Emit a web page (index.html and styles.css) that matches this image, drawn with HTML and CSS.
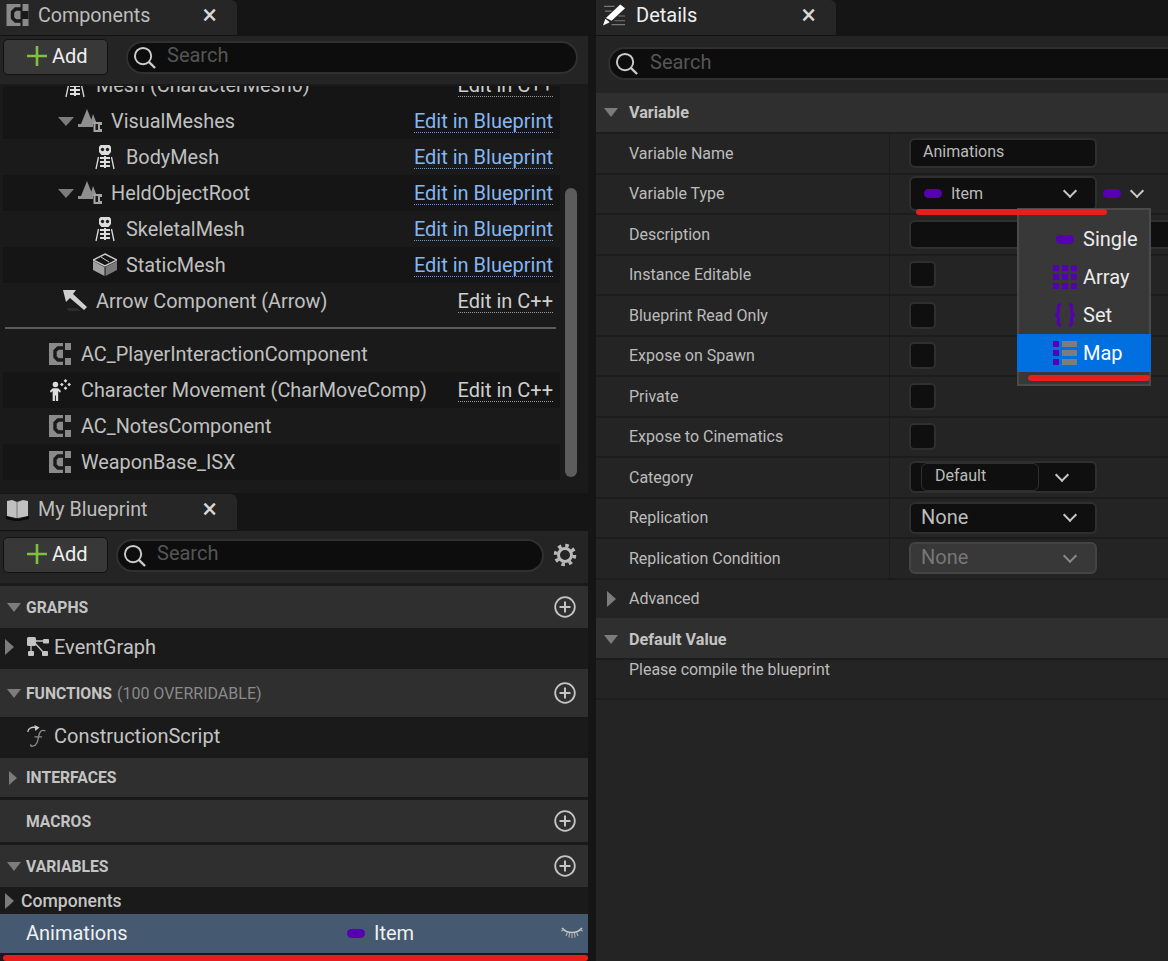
FILE: index.html
```html
<!DOCTYPE html>
<html>
<head>
    <title>Blueprint Editor</title>
    <link rel="stylesheet" href="styles.css">
</head>
<body>
    <svg class="defs" width="0" height="0">
        <symbol id="i-class" viewBox="0 0 22 22"><path d="M0 0H22V22H0Z" fill="#8a8a8a"/><path d="M15 5H9L6 8V14L9 17H15" fill="none" stroke="#1a1a1a" stroke-width="3.400"/><path d="M14 0h2v7h6v8h-6v7h-2z" fill="#1a1a1a"/></symbol>
        <symbol id="i-search" viewBox="0 0 24 24"><circle cx="10.5" cy="10.5" r="8.5" fill="none" stroke="#ccc" stroke-width="2"/><path d="M16.5 16.5L23 23" stroke="#ccc" stroke-width="2.4"/></symbol>
        <symbol id="i-plus" viewBox="0 0 20 20"><path d="M10 0V20M0 10H20" stroke="#7fc13f" stroke-width="2.6"/></symbol>
        <symbol id="i-add" viewBox="0 0 22 22"><circle cx="11" cy="11" r="9.8" fill="none" stroke="#c4c4c4" stroke-width="1.8"/><path d="M11 5.5V16.5M5.5 11H16.5" stroke="#c4c4c4" stroke-width="2"/></symbol>
        <symbol id="i-skeleton" viewBox="0 0 20 26"><path d="M5.500 1h9l1.500 2v5l-2.500 3h-7L4 8V3Z" fill="#ddd"/><circle cx="7.500" cy="5.500" r="1.700" fill="#222"/><circle cx="12.500" cy="5.500" r="1.700" fill="#222"/><path d="M5 13h10v2H5zM5 17h10v2H5zM5 21h10v2H5zM9 12h2v12H9z" fill="#ddd"/><path d="M3.500 13L1 25M16.500 13L19 25" stroke="#ddd" stroke-width="1.300" fill="none"/></symbol>
        <symbol id="i-scene" viewBox="0 0 24 24"><path d="M9 0L15 15H3ZM15 5L19 15H12Z" fill="#8f8f8f"/><path d="M0 15H15V18H0Z" fill="#8f8f8f"/><path d="M15.500 13H24V16H22V20H24V23H15.500Z" fill="#a5a5a5"/><path d="M17.500 15H20V21H17.500Z" fill="#1a1a1a"/></symbol>
        <symbol id="i-cube" viewBox="0 0 24 24"><path d="M12 1L24 7L12 13L0 7Z" fill="none" stroke="#c8c8c8" stroke-width="1.400"/><path d="M8 4L16 9" stroke="#c8c8c8"/><path d="M0 8L11.500 14V23L0 17Z" fill="#a0a0a0"/><path d="M24 8L12.500 14V23L24 17Z" fill="#787878"/></symbol>
        <symbol id="i-arrow" viewBox="0 0 24 22"><path d="M0 0H13L10 4L24 17L21 20L7 8L3 12Z" fill="#cfcfcf"/><path d="M3 18H14L18 21H6Z" fill="#2c2c2c"/></symbol>
        <symbol id="i-move" viewBox="0 0 24 24"><circle cx="7" cy="6" r="3" fill="#ddd"/><path d="M1 13L4 10H10L13 13L12 15L10 13V24H7.500V18H6.500V24H4V13L2 15Z" fill="#ddd"/><path d="M18 0L20 2L18 4L16 2ZM18 8L20 10L18 12L16 10ZM14 4L16 6L14 8L12 6ZM22 4L24 6L22 8L20 6Z" fill="#ddd"/></symbol>
        <symbol id="i-book" viewBox="0 0 23 22"><path d="M1 2L6 1L11 3L17 1L22 2L22 17L12 19H10L1 17Z" fill="#c0c0c0"/><path d="M11 3V19" stroke="#777"/><path d="M0 17L10 20H13L23 17V20L13 22H8L0 20Z" fill="#0a0a0a"/></symbol>
        <symbol id="i-pencil" viewBox="0 0 24 22"><path d="M18 0L23 4L9 17L3 14Z" fill="#fff"/><path d="M1 2H12M2 7H9M16 12H23M12 17H23M9 21H23" stroke="#777" stroke-width="1.200"/><path d="M0 22L2.500 15L7 18.500Z" fill="#fff"/></symbol>
        <symbol id="i-graph" viewBox="0 0 22 20"><rect x="0" y="0" width="9" height="9" rx="1.500" fill="#c4c4c4"/><rect x="16" y="2" width="6" height="4.500" rx="1" fill="#c4c4c4"/><rect x="1" y="14" width="6" height="5" rx="1" fill="#c4c4c4"/><rect x="15" y="14" width="6" height="5" rx="1" fill="#c4c4c4"/><path d="M8 4H16M4 8V14M8 6L16 15" stroke="#c4c4c4" stroke-width="1.300" fill="none"/></symbol>
        <symbol id="i-func" viewBox="0 0 24 26"><path d="M1 8C2 3 6 2 11 3" stroke="#ccc" stroke-width="1.600" fill="none"/><path d="M9 0L15 3L10 7Z" fill="#ccc"/><path d="M22 7C17 5 15 8 14 13C13 19 12 24 7 25C5 25.500 4 24.500 5 23M9 14H18" stroke="#8a8a8a" stroke-width="1.600" fill="none"/></symbol>
        <symbol id="i-lashes" viewBox="0 0 22 12"><path d="M1 1C6 7 16 7 21 1" stroke="#c8c8c8" stroke-width="1.600" fill="none"/><path d="M0 4L4 2.500M22 4L18 2.500M5 9L6.500 5M17 9L15.500 5M11 11V6.500M8 10.500L8.500 6M14 10.500L13.500 6" stroke="#b0b0b0" stroke-width="1.100"/></symbol>
        <symbol id="i-array" viewBox="0 0 24 24"><path d="M0 0h6v6H0zM9 0h6v6H9zM18 0h6v6h-6zM0 9h6v6H0zM9 9h6v6H9zM18 9h6v6h-6zM0 18h6v6H0zM9 18h6v6H9zM18 18h6v6h-6z" fill="#5500b5"/></symbol>
        <symbol id="i-set" viewBox="0 0 22 24"><path d="M7 1.500C3 1.500 4.500 4 4.500 8C4.500 11 3.500 12 1 12C3.500 12 4.500 13 4.500 16C4.500 20 3 22.500 7 22.500M15 1.500C19 1.500 17.500 4 17.500 8C17.500 11 18.500 12 21 12C18.500 12 17.500 13 17.500 16C17.500 20 19 22.500 15 22.500" fill="none" stroke="#5500b5" stroke-width="3"/></symbol>
        <symbol id="i-map" viewBox="0 0 24 24"><path d="M0 0h6v6H0zM0 9h6v6H0zM0 18h6v6H0z" fill="#5500b5"/><path d="M9 0h15v6H9zM9 9h15v6H9zM9 18h15v6H9z" fill="#7d7d7d"/></symbol>
    </svg>

    <div class="editor">
        <div class="left">
            <div class="tabstrip">
                <div class="tab tab-left">
                    <svg class="tab-icon"><use href="#i-class"/></svg>
                    <span class="tab-title">Components</span>
                    <span class="tab-close">×</span>
                </div>
            </div>
            <div class="toolbar">
                <button class="add-btn"><svg class="plus"><use href="#i-plus"/></svg>Add</button>
                <div class="search search-comp"><svg class="search-icon"><use href="#i-search"/></svg><span>Search</span></div>
            </div>

            <div class="tree">
                <div class="tree-rows">
                    <div class="row dark indent-2"><svg class="ic-skel"><use href="#i-skeleton"/></svg><span class="name">Mesh (CharacterMesh0)</span><a class="edit">Edit in C++</a></div>
                    <div class="row dark indent-3"><i class="tri-down"></i><svg class="ic-scene"><use href="#i-scene"/></svg><span class="name">VisualMeshes</span><a class="edit bp">Edit in Blueprint</a></div>
                    <div class="row indent-4"><svg class="ic-skel"><use href="#i-skeleton"/></svg><span class="name">BodyMesh</span><a class="edit bp">Edit in Blueprint</a></div>
                    <div class="row dark indent-3"><i class="tri-down"></i><svg class="ic-scene"><use href="#i-scene"/></svg><span class="name">HeldObjectRoot</span><a class="edit bp">Edit in Blueprint</a></div>
                    <div class="row indent-4"><svg class="ic-skel"><use href="#i-skeleton"/></svg><span class="name">SkeletalMesh</span><a class="edit bp">Edit in Blueprint</a></div>
                    <div class="row dark indent-4"><svg class="ic-cube"><use href="#i-cube"/></svg><span class="name">StaticMesh</span><a class="edit bp">Edit in Blueprint</a></div>
                    <div class="row indent-2"><svg class="ic-arrow"><use href="#i-arrow"/></svg><span class="name">Arrow Component (Arrow)</span><a class="edit">Edit in C++</a></div>
                    <div class="tree-sep"></div>
                    <div class="row indent-1"><svg class="ic-class"><use href="#i-class"/></svg><span class="name">AC_PlayerInteractionComponent</span></div>
                    <div class="row dark indent-1"><svg class="ic-class"><use href="#i-move"/></svg><span class="name">Character Movement (CharMoveComp)</span><a class="edit">Edit in C++</a></div>
                    <div class="row indent-1"><svg class="ic-class"><use href="#i-class"/></svg><span class="name">AC_NotesComponent</span></div>
                    <div class="row dark indent-1"><svg class="ic-class"><use href="#i-class"/></svg><span class="name">WeaponBase_ISX</span></div>
                </div>
                <div class="scrollbar"></div>
            </div>

            <div class="tabstrip tabstrip-2">
                <div class="tab tab-left">
                    <svg class="tab-icon"><use href="#i-book"/></svg>
                    <span class="tab-title">My Blueprint</span>
                    <span class="tab-close">×</span>
                </div>
            </div>
            <div class="toolbar toolbar-2">
                <button class="add-btn"><svg class="plus"><use href="#i-plus"/></svg>Add</button>
                <div class="search search-bp"><svg class="search-icon"><use href="#i-search"/></svg><span>Search</span></div>
                <svg class="gear" viewBox="0 0 24 24"><circle cx="12" cy="12" r="6.500" fill="none" stroke="#bbb" stroke-width="3"/><circle cx="12" cy="12" r="9.500" fill="none" stroke="#bbb" stroke-width="3.500" stroke-dasharray="3.500 3.960"/></svg>
            </div>

            <div class="sec sec-graphs"><i class="tri-down small"></i><b>GRAPHS</b><svg class="sec-add"><use href="#i-add"/></svg></div>
            <div class="item item-graph"><i class="tri-right"></i><svg class="ic-graph"><use href="#i-graph"/></svg><span>EventGraph</span></div>
            <div class="sec sec-func"><i class="tri-down small"></i><b>FUNCTIONS</b><span class="sec-note">(100 OVERRIDABLE)</span><svg class="sec-add"><use href="#i-add"/></svg></div>
            <div class="item item-graph item-plain"><svg class="ic-graph"><use href="#i-func"/></svg><span>ConstructionScript</span></div>
            <div class="sec sec-iface"><i class="tri-right small"></i><b>INTERFACES</b></div>
            <div class="sec sec-macros"><b>MACROS</b><svg class="sec-add"><use href="#i-add"/></svg></div>
            <div class="sec sec-vars"><i class="tri-down small"></i><b>VARIABLES</b><svg class="sec-add"><use href="#i-add"/></svg></div>
            <div class="var-group"><i class="tri-right"></i><b>Components</b></div>
            <div class="var-row">
                <span class="var-name">Animations</span>
                <span class="pill"></span>
                <span class="var-type">Item</span>
                <svg class="lashes"><use href="#i-lashes"/></svg>
            </div>
            <div class="mark mark-bottom"></div>
        </div>

        <div class="right">
            <div class="tabstrip">
                <div class="tab tab-details">
                    <svg class="tab-icon"><use href="#i-pencil"/></svg>
                    <span class="tab-title bright">Details</span>
                    <span class="tab-close">×</span>
                </div>
            </div>
            <div class="toolbar toolbar-details">
                <div class="search search-details"><svg class="search-icon"><use href="#i-search"/></svg><span>Search</span></div>
            </div>

            <div class="cat cat-variable"><i class="tri-down small"></i><b>Variable</b></div>

            <div class="prop"><label>Variable Name</label><div class="val"><div class="field field-name">Animations</div></div></div>
            <div class="prop"><label>Variable Type</label><div class="val">
                <div class="field field-type"><span class="pill"></span><span class="type-text">Item</span><i class="chev"></i></div>
                <span class="pill pill-side"></span><i class="chev chev-side"></i>
            </div></div>
            <div class="prop"><label>Description</label><div class="val"><div class="field field-desc"></div></div></div>
            <div class="prop"><label>Instance Editable</label><div class="val"><div class="check"></div></div></div>
            <div class="prop"><label>Blueprint Read Only</label><div class="val"><div class="check"></div></div></div>
            <div class="prop"><label>Expose on Spawn</label><div class="val"><div class="check"></div></div></div>
            <div class="prop"><label>Private</label><div class="val"><div class="check"></div></div></div>
            <div class="prop"><label>Expose to Cinematics</label><div class="val"><div class="check"></div></div></div>
            <div class="prop"><label>Category</label><div class="val">
                <div class="field field-cat"><span class="cat-input">Default</span><i class="chev"></i></div>
            </div></div>
            <div class="prop"><label>Replication</label><div class="val">
                <div class="field field-combo"><span>None</span><i class="chev"></i></div>
            </div></div>
            <div class="prop"><label>Replication Condition</label><div class="val">
                <div class="field field-combo disabled"><span>None</span><i class="chev"></i></div>
            </div></div>
            <div class="prop prop-adv"><i class="tri-right"></i><label>Advanced</label></div>

            <div class="cat cat-default"><i class="tri-down small"></i><b>Default Value</b></div>
            <div class="compile-note">Please compile the blueprint</div>

            <div class="menu">
                <div class="menu-item"><span class="menu-icon"><span class="pill"></span></span>Single</div>
                <div class="menu-item"><span class="menu-icon"><svg class="mi"><use href="#i-array"/></svg></span>Array</div>
                <div class="menu-item"><span class="menu-icon"><svg class="mi"><use href="#i-set"/></svg></span>Set</div>
                <div class="menu-item active"><span class="menu-icon"><svg class="mi"><use href="#i-map"/></svg></span>Map</div>
                <div class="mark mark-menu"></div>
            </div>
            <div class="mark mark-type"></div>
        </div>
    </div>
</body>
</html>
```

FILE: styles.css
```css
* {
    box-sizing: border-box;
}

html, body {
    margin: 0;
    padding: 0;
    height: 961px;
    overflow: hidden;
    background-color: #151515;
    font-family: Roboto, "Liberation Sans", sans-serif;
    color: #c0c0c0;
}

.defs {
    position: absolute;
}

.editor {
    display: flex;
    gap: 8px;
    height: 961px;
}

.left {
    position: relative;
    width: 588px;
    flex: none;
    background-color: #1a1a1a;
}

.right {
    position: relative;
    flex: 1;
    min-width: 0;
    background-color: #242424;
}

/* tabs */
.tabstrip {
    height: 36px;
    background-color: #151515;
    display: flex;
}

.tabstrip-2 {
    height: 38px;
    padding-top: 1px;
    margin-top: 6px;
}

.tab {
    display: flex;
    align-items: center;
    height: 100%;
    padding-bottom: 5px;
    background-color: #262626;
    border-top-right-radius: 6px;
    border-bottom: 1px solid #111;
}

.tab-left {
    width: 237px;
    padding-left: 6px;
}

.tab-details {
    width: 240px;
    padding-left: 7px;
}

.tab-icon {
    width: 23px;
    height: 22px;
    flex: none;
}

.tab-title {
    font-size: 19.7px;
    margin-left: 9px;
    flex: 1;
    color: #bdbdbd;
}

.tab-title.bright {
    font-size: 20px;
    color: #f0f0f0;
    margin-left: 10px;
}

.tab-close {
    font-size: 27px;
    line-height: 1;
    color: #d8d8d8;
    margin-right: 20px;
}

/* toolbars */
.toolbar {
    display: flex;
    align-items: center;
    height: 48px;
    padding: 0 3px 6px;
    background-color: #242424;
}

.toolbar-2 {
    height: 55px;
    padding-bottom: 4px;
    border-bottom: 3px solid #1a1a1a;
}

.toolbar-details {
    height: 57px;
    padding: 0 0 2px 12px;
}

.add-btn {
    display: flex;
    align-items: center;
    width: 105px;
    height: 36px;
    padding: 0 0 2px 23px;
    border: 1px solid #111;
    border-radius: 5px;
    background-color: #383838;
    color: #f0f0f0;
    font-family: inherit;
    font-size: 20px;
}

.plus {
    width: 20px;
    height: 20px;
    margin-right: 5px;
}

.search {
    display: flex;
    align-items: center;
    height: 33px;
    background-color: #0d0d0d;
    border: 2px solid #303030;
    border-radius: 17px;
    font-size: 20px;
    color: #555;
    padding-left: 5px;
}

.search span {
    margin-top: -4px;
}

.search-comp {
    width: 452px;
    margin-left: 18px;
}

.search-bp {
    width: 428px;
    margin-left: 8px;
}

.search-details {
    width: 570px;
    border-right: none;
    border-radius: 17px 0 0 17px;
}

.search-icon {
    width: 23px;
    height: 23px;
    margin-right: 11px;
    flex: none;
}

.search-details .search-icon {
    margin-right: 12px;
}

.gear {
    width: 24px;
    height: 24px;
    margin-left: 9px;
}

/* component tree */
.tree {
    position: relative;
    height: 403px;
    overflow: hidden;
    background-color: #1a1a1a;
    border-top: 2px solid #1a1a1a;
}

.tree-rows {
    margin-top: -19px;
    padding-left: 3px;
    width: 560px;
}

.row {
    display: flex;
    align-items: center;
    height: 36px;
    font-size: 19.85px;
    padding-right: 7px;
    color: #c0c0c0;
}

.row.dark {
    background-color: #151515;
}

.indent-1 {
    padding-left: 46px;
}

.indent-2 {
    padding-left: 60px;
}

.indent-3 {
    padding-left: 55px;
}

.indent-4 {
    padding-left: 90px;
}

.name {
    white-space: nowrap;
    flex: 1;
}

.edit {
    font-size: 20px;
    color: #cfcfcf;
    border-bottom: 1px dotted #9a9a9a;
    line-height: 21px;
    margin-top: 2px;
}

.edit.bp {
    color: #85b7f2;
    border-bottom-color: #6f97c7;
}

.tree-sep {
    height: 2px;
    margin: 8px 4px 7px 2px;
    background-color: #5a5a5a;
}

.ic-skel {
    width: 20px;
    height: 26px;
    margin: 0 11px 0 2px;
    flex: none;
}

.ic-scene {
    width: 24px;
    height: 24px;
    margin: 0 9px 0 4px;
    flex: none;
}

.ic-cube {
    width: 24px;
    height: 24px;
    margin: 0 9px 0 0;
    flex: none;
}

.ic-arrow {
    width: 24px;
    height: 22px;
    margin: 0 9px 0 0;
    flex: none;
}

.ic-class {
    width: 22px;
    height: 22px;
    margin-right: 10px;
    flex: none;
}

.scrollbar {
    position: absolute;
    left: 565px;
    top: 102px;
    width: 12px;
    height: 289px;
    background-color: #5c5c5c;
    border-radius: 6px;
}

/* triangles and chevrons */
.tri-down {
    display: inline-block;
    flex: none;
    width: 0;
    height: 0;
    border-left: 8px solid transparent;
    border-right: 8px solid transparent;
    border-top: 9px solid #7c7c7c;
}

.tri-down.small {
    border-left-width: 7.5px;
    border-right-width: 7.5px;
}

.tri-right {
    display: inline-block;
    flex: none;
    width: 0;
    height: 0;
    border-top: 8px solid transparent;
    border-bottom: 8px solid transparent;
    border-left: 9px solid #7c7c7c;
}

.tri-right.small {
    border-top-width: 7px;
    border-bottom-width: 7px;
    border-left-width: 8px;
}

.chev {
    display: inline-block;
    flex: none;
    width: 10px;
    height: 10px;
    border-right: 2px solid #c8c8c8;
    border-bottom: 2px solid #c8c8c8;
    transform: rotate(45deg);
    margin-top: -5px;
}

.pill {
    display: inline-block;
    flex: none;
    width: 18px;
    height: 9px;
    border-radius: 5px;
    background-color: #5500b5;
}

/* my blueprint sections */
.sec {
    display: flex;
    align-items: center;
    padding-left: 7px;
    background-color: #2f2f2f;
    font-size: 16px;
    color: #c4c4c4;
}

.sec b {
    margin-left: 5px;
    font-size: 15.7px;
    font-weight: 700;
}

.sec-note {
    margin-left: 5px;
    color: #8a8a8a;
}

.sec-add {
    width: 22px;
    height: 22px;
    margin-left: auto;
    margin-right: 12px;
}

.sec-graphs {
    height: 42px;
}

.sec-func {
    height: 48px;
}

.sec-iface {
    height: 39px;
    padding-left: 9px;
    margin-bottom: 3px;
}

.sec-iface b {
    margin-left: 9px;
}

.sec-macros {
    height: 42px;
    margin-bottom: 3px;
    padding-left: 21px;
}

.sec-vars {
    height: 42px;
}

.item {
    display: flex;
    align-items: center;
    height: 41px;
    padding: 0 0 4px 5px;
    font-size: 20px;
    color: #c4c4c4;
}

.item-plain {
    padding-left: 26px;
}

.ic-graph {
    width: 22px;
    height: 22px;
    margin-right: 6px;
    flex: none;
}

.tri-right + .ic-graph {
    margin-left: 13px;
    margin-right: 5px;
}

.var-group {
    display: flex;
    align-items: center;
    height: 27px;
    padding-left: 5px;
    font-size: 17.6px;
    color: #c4c4c4;
}

.var-group b {
    margin-left: 7px;
    font-weight: 500;
}

.var-row {
    display: flex;
    align-items: center;
    height: 39px;
    padding: 0 0 1px 26px;
    background-color: #455a71;
    font-size: 20px;
    color: #f0f0f0;
}

.var-name {
    width: 321px;
}

.var-type {
    margin-left: 9px;
}

.lashes {
    width: 22px;
    height: 12px;
    margin-left: auto;
    margin-right: 5px;
}

/* details panel */
.cat {
    display: flex;
    align-items: center;
    height: 40px;
    padding-left: 8px;
    background-color: #2f2f2f;
    font-size: 16.200px;
    color: #c4c4c4;
    border-bottom: 2px solid #1c1c1c;
}

.cat b {
    margin-left: 11px;
    font-weight: 700;
}

.cat-variable {
    height: 41px;
}

.cat-default {
    height: 42px;
    padding-top: 3px;
}

.prop {
    display: flex;
    align-items: center;
    height: 40.5px;
    border-bottom: 2px solid #1c1c1c;
    background-color: #242424;
    font-size: 16px;
}

.prop label {
    display: flex;
    align-items: center;
    width: 294px;
    height: 100%;
    padding-left: 33px;
    border-right: 1px solid #1c1c1c;
    color: #bcbcbc;
    flex: none;
}

.val {
    display: flex;
    align-items: center;
    padding-left: 19px;
    min-width: 0;
}

.prop-adv {
    padding-left: 11px;
    border-bottom: none;
    height: 38px;
}

.prop-adv label {
    border: none;
    padding-left: 13px;
}

.field {
    display: flex;
    align-items: center;
    flex: none;
    width: 188px;
    background-color: #0f0f0f;
    border: 2px solid #2f2f2f;
    border-radius: 6px;
}

.field-name {
    height: 30px;
    padding: 0 0 3px 12px;
    color: #bcbcbc;
}

.field-type {
    height: 35px;
    padding-left: 13px;
}

.type-text {
    margin-left: 9px;
    flex: 1;
    color: #bcbcbc;
}

.field-type .chev,
.field-combo .chev {
    margin-right: 20px;
}

.pill-side {
    margin-left: 6px;
}

.chev-side {
    margin-left: 11px;
}

.field-desc {
    width: 270px;
    height: 29px;
    border-right: none;
}

.check {
    width: 27px;
    height: 27px;
    background-color: #0f0f0f;
    border: 2px solid #2f2f2f;
    border-radius: 5px;
}

.field-cat {
    height: 32px;
    padding-left: 10px;
}

.cat-input {
    width: 118px;
    height: 28px;
    line-height: 24px;
    padding-left: 13px;
    border: 1px solid #2f2f2f;
    border-radius: 6px;
    color: #bcbcbc;
    margin-right: 18px;
}

.field-combo {
    height: 32px;
    padding-left: 10px;
    font-size: 20px;
    justify-content: space-between;
    color: #bcbcbc;
}

.field-combo span {
    margin-top: -2px;
}

.field-combo.disabled {
    background-color: #383838;
    border-color: #444;
    color: #777;
}

.field-combo.disabled .chev {
    border-color: #8a8a8a;
}

.compile-note {
    height: 40px;
    padding: 0 0 0 33px;
    font-size: 15.950px;
    line-height: 20px;
    color: #bcbcbc;
    background-color: #242424;
    border-bottom: 2px solid #1c1c1c;
}

/* popup menu and the red marks drawn on the screenshot */
.menu {
    position: absolute;
    left: 421px;
    top: 208px;
    width: 134px;
    height: 178px;
    padding-top: 10px;
    background-color: #383838;
    border: 2px solid #4a4a4a;
    font-size: 20px;
    color: #ececec;
}

.menu-item {
    display: flex;
    align-items: center;
    height: 38px;
}

.menu-item.active {
    margin: 0 -2px;
    padding-left: 2px;
    background-color: #0070e0;
    color: #fff;
}

.menu-icon {
    display: flex;
    justify-content: flex-end;
    align-items: center;
    width: 58px;
    margin-right: 6px;
}

.menu-icon .pill {
    margin-right: 3px;
}

.mi {
    width: 24px;
    height: 24px;
}

.mark {
    position: absolute;
    background-color: #e61e1e;
    border-radius: 3px;
}

.mark-bottom {
    left: 3px;
    right: 0;
    top: 955px;
    height: 6px;
}

.mark-type {
    left: 320px;
    top: 209px;
    width: 191px;
    height: 6px;
}

.mark-menu {
    left: 9px;
    top: 165px;
    width: 122px;
    height: 6px;
}
```
